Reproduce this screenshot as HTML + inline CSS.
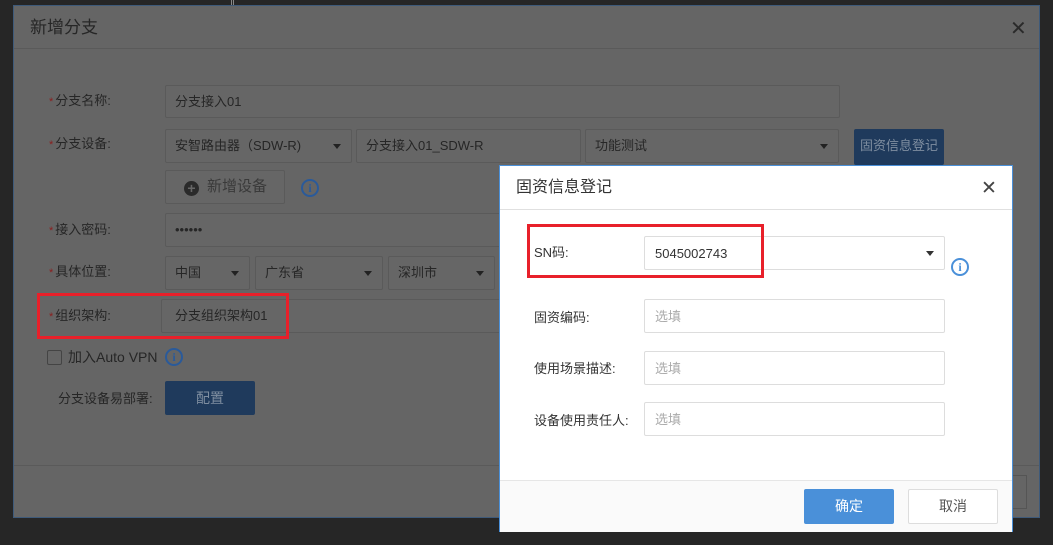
<!DOCTYPE html>
<html><head><meta charset="utf-8"><style>
*{box-sizing:border-box;margin:0;padding:0}
body{width:1053px;height:545px;background:#262626;position:relative;overflow:hidden;font-family:"Liberation Sans","Noto Sans CJK SC",sans-serif;font-size:13px;color:#2a2a2a}
.a{position:absolute}
.od{left:13px;top:5px;width:1027px;height:513px;background:#656565;border:1px solid #3e5a7a}
.in{position:absolute;border:1px solid #5a5a5a;border-radius:2px;background:#666;padding-left:9px;line-height:32px;color:#262626}
.lbl{position:absolute;color:#262626;line-height:16px}
.lbl b{color:#8a2020;font-weight:normal;font-size:11px;margin-right:2px}
.car{position:absolute;right:10px;top:14px;border-left:4px solid transparent;border-right:4px solid transparent;border-top:5px solid #222}
.info{position:absolute;width:18px;height:18px;border:2px solid #2a5a9a;border-radius:50%;color:#2a5a9a;font:bold 12px/14px "Liberation Serif",serif;text-align:center}
.red{position:absolute;border:3px solid #e8202a}
.m{left:499px;top:165px;width:514px;height:367px;background:#fff;border:1px solid #4a90d9}
.mi{position:absolute;left:144px;width:301px;height:34px;border:1px solid #ddd;border-radius:2px;padding-left:10px;line-height:34px;color:#aaa}
.ml{position:absolute;left:34px;color:#333;line-height:16px}
</style></head><body>
<div class="a" style="left:231px;top:0;width:3px;height:5px;border-left:1px solid #888;border-right:1px solid #888"></div>
<div class="a od">
 <div class="a" style="left:16px;top:11px;font-size:17px;line-height:22px;color:#262626">新增分支</div>
 <div class="a" style="left:996px;top:12px;font-size:20px;line-height:22px;color:#2a2a2a">✕</div>
 <div class="a" style="left:0;top:42px;width:100%;height:1px;background:#5a5a5a"></div>
 <div class="a" style="left:0;top:459px;width:100%;height:1px;background:#5a5a5a"></div>
</div>
<div class="lbl" style="left:49px;top:93px"><b>*</b>分支名称:</div>
<div class="in" style="left:165px;top:85px;width:675px;height:33px">分支接入01</div>
<div class="lbl" style="left:49px;top:136px"><b>*</b>分支设备:</div>
<div class="in" style="left:165px;top:129px;width:187px;height:34px">安智路由器（SDW-R)<span class="car"></span></div>
<div class="in" style="left:356px;top:129px;width:225px;height:34px">分支接入01_SDW-R</div>
<div class="in" style="left:585px;top:129px;width:254px;height:34px">功能测试<span class="car"></span></div>
<div class="a" style="left:854px;top:129px;width:90px;height:36px;background:#1f3a5c;border-radius:2px;color:#7f8ea0;line-height:34px;text-align:center">固资信息登记</div>
<div class="in" style="left:165px;top:170px;width:120px;height:34px;padding-left:18px;color:#3a3a3a;font-size:15px"><span style="display:inline-block;width:15px;height:15px;border-radius:50%;background:#2a2a2a;color:#666;font:bold 14px/15px sans-serif;text-align:center;vertical-align:-2px;margin-right:8px">+</span>新增设备</div>
<div class="info" style="left:301px;top:179px">i</div>
<div class="lbl" style="left:49px;top:222px"><b>*</b>接入密码:</div>
<div class="in" style="left:165px;top:213px;width:340px;height:34px">••••••</div>
<div class="lbl" style="left:49px;top:264px"><b>*</b>具体位置:</div>
<div class="in" style="left:165px;top:256px;width:85px;height:34px">中国<span class="car"></span></div>
<div class="in" style="left:255px;top:256px;width:128px;height:34px">广东省<span class="car"></span></div>
<div class="in" style="left:388px;top:256px;width:107px;height:34px">深圳市<span class="car"></span></div>
<div class="lbl" style="left:49px;top:308px"><b>*</b>组织架构:</div>
<div class="in" style="left:161px;top:299px;width:345px;height:34px;padding-left:13px">分支组织架构01</div>
<div class="red" style="left:37px;top:293px;width:252px;height:46px"></div>
<div class="a" style="left:47px;top:350px;width:15px;height:15px;border:1px solid #444;border-radius:2px"></div>
<div class="lbl" style="left:68px;top:349px;font-size:14px">加入Auto VPN</div>
<div class="info" style="left:165px;top:348px">i</div>
<div class="lbl" style="left:58px;top:391px">分支设备易部署:</div>
<div class="a" style="left:165px;top:381px;width:90px;height:34px;background:#1f3a5c;border-radius:2px;color:#7f8ea0;line-height:34px;text-align:center;font-size:14px">配置</div>
<div class="a" style="left:1013px;top:475px;width:14px;height:34px;border:1px solid #555;border-left:none"></div>

<div class="a m">
 <div class="a" style="left:16px;top:11px;font-size:16px;line-height:22px;color:#333">固资信息登记</div>
 <div class="a" style="left:481px;top:12px;font-size:19px;line-height:22px;color:#444">✕</div>
 <div class="a" style="left:0;top:43px;width:100%;height:1px;background:#e0e0e0"></div>
 <div class="ml" style="top:79px">SN码:</div>
 <div class="mi" style="top:70px;color:#333">5045002743<span class="car" style="border-top-color:#333"></span></div>
 <div class="info" style="left:451px;top:92px;border-color:#4a90d9;color:#4a90d9">i</div>
 <div class="ml" style="top:144px">固资编码:</div>
 <div class="mi" style="top:133px">选填</div>
 <div class="ml" style="top:195px">使用场景描述:</div>
 <div class="mi" style="top:185px">选填</div>
 <div class="ml" style="top:247px">设备使用责任人:</div>
 <div class="mi" style="top:236px">选填</div>
 <div class="a" style="left:0;top:314px;width:100%;height:52px;background:#fafafa;border-top:1px solid #e6e6e6"></div>
 <div class="a" style="left:304px;top:323px;width:90px;height:35px;background:#4a90d9;border-radius:2px;color:#fff;text-align:center;line-height:35px;font-size:14px">确定</div>
 <div class="a" style="left:408px;top:323px;width:90px;height:35px;background:#fff;border:1px solid #ddd;border-radius:2px;color:#555;text-align:center;line-height:33px;font-size:14px">取消</div>
</div>
<div class="red" style="left:527px;top:224px;width:237px;height:54px"></div>
</body></html>
